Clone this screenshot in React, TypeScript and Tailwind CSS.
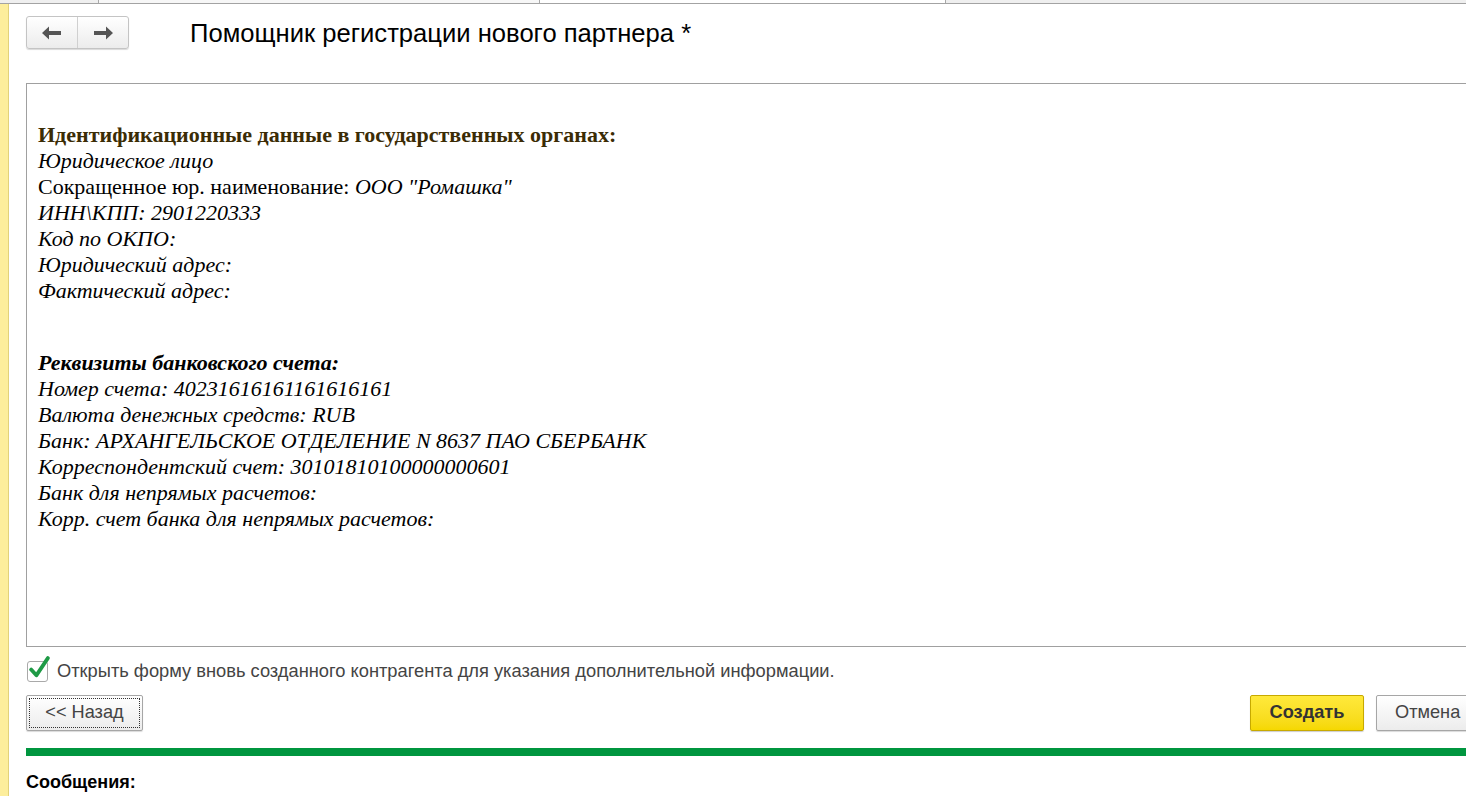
import { useState } from "react";

const sans = { fontFamily: '"Liberation Sans", Arial, sans-serif' };
const serif = { fontFamily: '"Liberation Serif", "Times New Roman", serif' };

function NavButtons() {
  return (
    <div className="flex h-[33px] w-[103px] overflow-hidden rounded-[3px] border border-[#c4c4c4] bg-gradient-to-b from-white to-[#ececec] shadow-[0_1px_1px_rgba(0,0,0,0.15)]">
      <div className="flex flex-1 items-center justify-center border-r border-[#d0d0d0]">
        <svg width="20" height="14" viewBox="0 0 20 14">
          <path d="M0 7 L7 0.5 L7 5 L19 5 L19 9 L7 9 L7 13.5 Z" fill="#555" />
        </svg>
      </div>
      <div className="flex flex-1 items-center justify-center">
        <svg width="20" height="14" viewBox="0 0 20 14">
          <path d="M20 7 L13 0.5 L13 5 L1 5 L1 9 L13 9 L13 13.5 Z" fill="#555" />
        </svg>
      </div>
    </div>
  );
}

const idLines: { label: string; value?: string; plainLabel?: boolean }[] = [
  { label: "Юридическое лицо" },
  { label: "Сокращенное юр. наименование: ", value: 'ООО "Ромашка"', plainLabel: true },
  { label: "ИНН\\КПП: 2901220333" },
  { label: "Код по ОКПО:" },
  { label: "Юридический адрес:" },
  { label: "Фактический адрес:" },
];

const bankLines = [
  "Номер счета: 40231616161161616161",
  "Валюта денежных средств: RUB",
  "Банк: АРХАНГЕЛЬСКОЕ ОТДЕЛЕНИЕ N 8637 ПАО СБЕРБАНК",
  "Корреспондентский счет: 30101810100000000601",
  "Банк для непрямых расчетов:",
  "Корр. счет банка для непрямых расчетов:",
];

export default function App() {
  const [openForm, setOpenForm] = useState(true);

  return (
    <div className="relative flex h-[796px] w-[1466px] flex-col overflow-hidden bg-white" style={sans}>
      {/* tab strip */}
      <div className="flex h-[4px] shrink-0 border-b border-[#a3a3a3] bg-[#efefef]">
        <div className="w-[99px] border-r border-[#a8a8a8]" />
        <div className="w-[441px] border-r border-[#a8a8a8] bg-[#f7f7f7]" />
        <div className="w-[406px] border-r border-[#a8a8a8] bg-white" />
        <div className="flex-1" />
      </div>

      <div className="flex min-h-0 flex-1">
        <div className="w-[9px] shrink-0 border-r border-[#e2d27a] bg-[#fdee9c]" />

        <div className="flex min-w-0 flex-1 flex-col pl-[17px]">
          {/* header */}
          <div className="flex h-[79px] shrink-0 items-start pt-[12px]">
            <NavButtons />
            <h1 className="ml-[61px] mt-[3px] text-[25.6px] leading-[28px] text-black">
              Помощник регистрации нового партнера *
            </h1>
          </div>

          {/* document */}
          <div
            className="h-[564px] shrink-0 border-y border-l border-[#a0a0a0] pl-[11px] pt-[38px] text-[22px] leading-[26px] text-black"
            style={serif}
          >
            <div className="font-bold text-[#3b2c05]">Идентификационные данные в государственных органах:</div>
            {idLines.map((l) => (
              <div key={l.label} className={l.plainLabel ? "" : "italic"}>
                {l.label}
                {l.value && <span className="italic">{l.value}</span>}
              </div>
            ))}
            <div className="mt-[46px]">
              <div className="font-bold italic">Реквизиты банковского счета:</div>
              {bankLines.map((l) => (
                <div key={l} className="italic">
                  {l}
                </div>
              ))}
            </div>
          </div>

          {/* checkbox */}
          <label className="mt-[13px] flex h-[22px] cursor-pointer items-center">
            <span
              onClick={() => setOpenForm(!openForm)}
              className="relative ml-[1px] h-[21px] w-[21px] rounded-[3px] border border-[#a9a9a9] bg-white"
            >
              {openForm && (
                <svg className="absolute -top-[6px] left-[1px]" width="21" height="23" viewBox="0 0 20 22">
                  <path d="M2 13 L7 18.5 L18 2" fill="none" stroke="#1e9a45" strokeWidth="3.6" strokeLinecap="round" strokeLinejoin="round" />
                </svg>
              )}
            </span>
            <span className="ml-[9px] text-[18.3px] text-[#444]">
              Открыть форму вновь созданного контрагента для указания дополнительной информации.
            </span>
          </label>

          {/* buttons */}
          <div className="mt-[13px] flex h-[36px] items-center">
            <button className="h-[36px] w-[117px] rounded-[2px] border border-[#a6a6a6] bg-gradient-to-b from-white to-[#ececec] p-[2px] shadow-[0_1px_1px_rgba(0,0,0,0.15)]">
              <span className="flex h-full w-full items-center justify-center border border-dotted border-[#333] text-[18.2px] text-[#444]">
                &lt;&lt; Назад
              </span>
            </button>
            <div className="flex-1" />
            <button className="h-[36px] w-[114px] rounded-[2px] border border-[#c7a900] bg-gradient-to-b from-[#ffe93a] to-[#f5d800] text-[18.2px] font-bold text-[#333] shadow-[0_1px_1px_rgba(0,0,0,0.2)]">
              Создать
            </button>
            <button className="ml-[12px] mr-[-20px] h-[36px] w-[110px] rounded-[2px] border border-[#a6a6a6] bg-gradient-to-b from-white to-[#ececec] pl-[18px] text-left text-[18.2px] text-[#444] shadow-[0_1px_1px_rgba(0,0,0,0.15)]">
              Отмена
            </button>
          </div>

          <div className="mt-[17px] h-[8px] shrink-0 bg-[#00963f]" />

          <div className="mt-[13px] text-[18px] font-bold text-black">Сообщения:</div>
        </div>
      </div>
    </div>
  );
}
